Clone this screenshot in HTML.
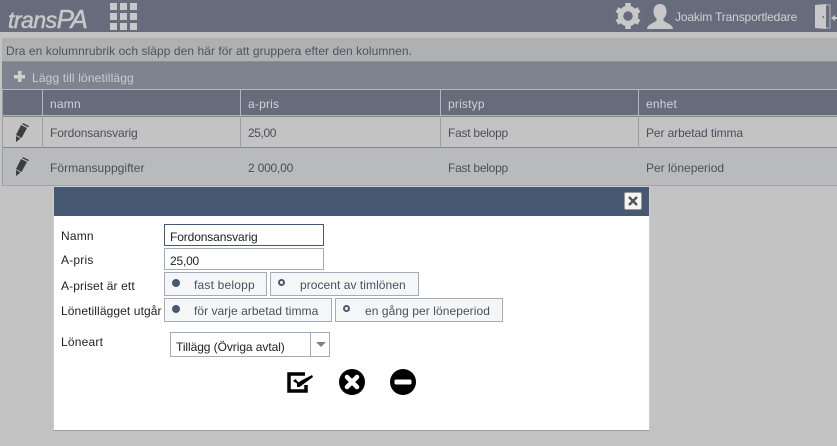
<!DOCTYPE html>
<html lang="sv"><head><meta charset="utf-8"><title>transPA</title>
<style>
html,body{margin:0;padding:0;width:837px;height:446px;overflow:hidden;background:#c3c3c3}
body{position:relative;font-family:"Liberation Sans",sans-serif;font-size:12px;color:#3c3c3c}
.a{position:absolute}
.t{position:absolute;white-space:nowrap;line-height:16px}
.v{position:absolute;width:1px}
.box{position:absolute;box-sizing:border-box;border:1px solid #a4abb8;background:#f5f6f8;height:24px}
.dot{position:absolute;border-radius:50%;box-sizing:border-box}
.on{width:8px;height:8px;background:#475873}
.off{width:7px;height:7px;border:2px solid #475873;background:#fff}
.d{color:#222}
.b{color:#4a4f5a}
</style></head><body>
<div class="a" style="left:0;top:0;width:837px;height:32px;background:#666c7c"></div>
<div class="t" style="left:8px;top:4px;font-size:23px;line-height:30px;font-style:italic;color:#c8c8c8;letter-spacing:-.5px;-webkit-text-stroke:.5px #c8c8c8">trans<span style="font-size:26px;letter-spacing:-1.500px">PA</span></div>
<svg class="a" style="left:110px;top:3px" width="27" height="27" fill="#c8c8c8"><rect width="7" height="7"/><rect x="10" width="7" height="7"/><rect x="20" width="7" height="7"/><rect y="10" width="7" height="7"/><rect x="10" y="10" width="7" height="7"/><rect x="20" y="10" width="7" height="7"/><rect y="20" width="7" height="7"/><rect x="10" y="20" width="7" height="7"/><rect x="20" y="20" width="7" height="7"/></svg>
<svg class="a" style="left:615px;top:3px" width="26" height="26" viewBox="0 0 26 26"><circle cx="13" cy="13" r="7.500" fill="none" stroke="#c8c8c8" stroke-width="5.500"/><g stroke="#c8c8c8" stroke-width="5.500"><path d="M13 0v4M13 22v4M2 6.600l3.500 2M20.500 17.400l3.500 2M24 6.600l-3.500 2M5.500 17.400l-3.500 2"/></g></svg>
<svg class="a" style="left:646px;top:3px" width="28" height="27" viewBox="0 0 28 27"><path d="M14 1c4.500 0 6.500 3.500 6.500 7.500 0 3-1.200 5.500-3 7v2c0 1.500 9.500 3.500 9.500 8.500H1c0-5 9.500-7 9.500-8.500v-2c-1.800-1.500-3-4-3-7C7.500 4.500 9.500 1 14 1z" fill="#c8c8c8"/></svg>
<div class="t" style="left:675px;top:9px;color:#d2d2d2;font-size:12px;letter-spacing:-.15px">Joakim Transportledare</div>
<svg class="a" style="left:814px;top:3px" width="23" height="28" viewBox="0 0 23 28"><path d="M1 2l11-1v25l-11-1z" fill="#c8c8c8"/><path d="M12 2h4v23h-4" fill="none" stroke="#b4b6bb" stroke-width="1"/><rect x="8.500" y="13" width="1.500" height="2" fill="#777"/><path d="M17 15l4-3v2h2v2h-2v2z" fill="#c8c8c8"/></svg>

<div class="a" style="left:2px;top:38px;width:835px;height:24px;background:#afb0b2;border-bottom:1px solid #8f9197;box-sizing:border-box"></div>
<div class="a" style="left:0;top:38px;width:2px;height:149px;background:#c3c3c3"></div>
<div class="t" style="left:6px;top:43px;font-size:12px;color:#4f525a;letter-spacing:.06px">Dra en kolumnrubrik och släpp den här för att gruppera efter den kolumnen.</div>
<div class="a" style="left:2px;top:62px;width:835px;height:27px;background:#7e848f"></div>
<svg class="a" style="left:14px;top:71px" width="11" height="11" fill="#d0d0d0"><rect x="4" width="3.500" height="11"/><rect y="4" width="11" height="3.500"/></svg>
<div class="t" style="left:32px;top:70px;color:#c9ccd0;letter-spacing:.15px">Lägg till lönetillägg</div>
<div class="a" style="left:2px;top:89px;width:835px;height:1px;background:#b4b6ba"></div>
<div class="a" style="left:2px;top:90px;width:835px;height:25px;background:#666c7c"></div>
<div class="a" style="left:2px;top:115px;width:835px;height:1px;background:#b0b1b4"></div>
<div class="a" style="left:2px;top:116px;width:835px;height:1px;background:#85878c"></div>
<div class="a" style="left:2px;top:117px;width:835px;height:30px;background:#c3c3c3"></div>
<div class="a" style="left:2px;top:147px;width:835px;height:1px;background:#85878c"></div>
<div class="a" style="left:2px;top:148px;width:835px;height:37px;background:#b9babc"></div>
<div class="a" style="left:2px;top:185px;width:835px;height:1px;background:#a3a4a7"></div>
<div class="v" style="left:2px;top:90px;height:96px;background:#9b9da1"></div>

<div class="v" style="left:42px;top:89px;height:27px;background:#b4b6ba"></div>
<div class="v" style="left:240px;top:89px;height:27px;background:#b4b6ba"></div>
<div class="v" style="left:440px;top:89px;height:27px;background:#b4b6ba"></div>
<div class="v" style="left:638px;top:89px;height:27px;background:#b4b6ba"></div>
<div class="v" style="left:42px;top:116px;height:32px;background:#9b9da1"></div>
<div class="v" style="left:240px;top:116px;height:32px;background:#9b9da1"></div>
<div class="v" style="left:440px;top:116px;height:32px;background:#9b9da1"></div>
<div class="v" style="left:638px;top:116px;height:32px;background:#9b9da1"></div>

<div class="t" style="left:50px;top:96px;color:#d0d2d6;letter-spacing:.2px">namn</div>
<div class="t" style="left:248px;top:96px;color:#d0d2d6;letter-spacing:.2px">a-pris</div>
<div class="t" style="left:448px;top:96px;color:#d0d2d6;letter-spacing:.2px">pristyp</div>
<div class="t" style="left:646px;top:96px;color:#d0d2d6;letter-spacing:.2px">enhet</div>

<svg class="a" style="left:15px;top:122px" width="15" height="20" viewBox="0 0 15 20"><path d="M6 3l6 3-5.500 10L1 13z" fill="#3d3d3d"/><path d="M8 1l6 3-.8 1.300-6-3z" fill="#3d3d3d"/><path d="M1 14l4.500 2.500L1 20z" fill="#3d3d3d"/></svg>
<svg class="a" style="left:15px;top:156px" width="15" height="20" viewBox="0 0 15 20"><path d="M6 3l6 3-5.500 10L1 13z" fill="#3d3d3d"/><path d="M8 1l6 3-.8 1.300-6-3z" fill="#3d3d3d"/><path d="M1 14l4.500 2.500L1 20z" fill="#3d3d3d"/></svg>

<div class="t b" style="left:50px;top:125px;letter-spacing:-.12px">Fordonsansvarig</div>
<div class="t b" style="left:248px;top:125px;letter-spacing:-.4px">25,00</div>
<div class="t b" style="left:448px;top:125px;letter-spacing:-.25px">Fast belopp</div>
<div class="t b" style="left:646px;top:125px;letter-spacing:-.1px">Per arbetad timma</div>
<div class="t b" style="left:50px;top:160px;letter-spacing:.03px">Förmansuppgifter</div>
<div class="t b" style="left:248px;top:160px;letter-spacing:-.2px">2 000,00</div>
<div class="t b" style="left:448px;top:160px;letter-spacing:-.25px">Fast belopp</div>
<div class="t b" style="left:646px;top:160px;letter-spacing:0">Per löneperiod</div>

<div class="a" style="left:53px;top:186px;width:597px;height:245px;background:#fff;border:1px solid #c9ccd3;border-bottom-color:#a0a0a0;box-sizing:border-box"></div>
<div class="a" style="left:54px;top:187px;width:595px;height:29px;background:#475873"></div>
<div class="a" style="left:624px;top:192px;width:18px;height:18px;box-sizing:border-box;background:#f4f4f4;border:1px solid #9a9a9a;border-radius:2px"></div>
<svg class="a" style="left:628px;top:196px" width="10" height="10"><path d="M1 1l8 8M9 1l-8 8" stroke="#555" stroke-width="2.400"/></svg>

<div class="t d" style="left:61px;top:228px;letter-spacing:.2px">Namn</div>
<div class="a" style="left:164px;top:224px;width:160px;height:22px;box-sizing:border-box;border:1px solid #475873;background:#fff"></div>
<div class="t d" style="left:170px;top:229px;letter-spacing:-.12px">Fordonsansvarig</div>
<div class="t d" style="left:61px;top:252px;letter-spacing:.2px">A-pris</div>
<div class="a" style="left:164px;top:248px;width:160px;height:22px;box-sizing:border-box;border:1px solid #a4abb8;background:#fff"></div>
<div class="t d" style="left:170px;top:253px;letter-spacing:-.2px">25,00</div>
<div class="t d" style="left:61px;top:278px;letter-spacing:.12px">A-priset är ett</div>
<div class="box" style="left:164px;top:272px;width:103px"></div>
<div class="dot on" style="left:172px;top:279px"></div>
<div class="t b" style="left:194px;top:277px;letter-spacing:.2px">fast belopp</div>
<div class="box" style="left:270px;top:272px;width:149px"></div>
<div class="dot off" style="left:278px;top:279px"></div>
<div class="t b" style="left:300px;top:277px;letter-spacing:.05px">procent av timlönen</div>
<div class="t d" style="left:61px;top:303px;letter-spacing:.1px">Lönetillägget utgår</div>
<div class="box" style="left:164px;top:298px;width:168px"></div>
<div class="dot on" style="left:172px;top:305px"></div>
<div class="t b" style="left:194px;top:303px;letter-spacing:.04px">för varje arbetad timma</div>
<div class="box" style="left:335px;top:298px;width:168px"></div>
<div class="dot off" style="left:343px;top:305px"></div>
<div class="t b" style="left:365px;top:303px;letter-spacing:.07px">en gång per löneperiod</div>
<div class="t d" style="left:61px;top:334px;letter-spacing:.2px">Löneart</div>
<div class="a" style="left:170px;top:332px;width:160px;height:25px;box-sizing:border-box;border:1px solid #a4abb8;background:#fff"></div>
<div class="v" style="left:310px;top:333px;height:23px;background:#a4abb8"></div>
<div class="a" style="left:316px;top:342px;width:0;height:0;border-left:5px solid transparent;border-right:5px solid transparent;border-top:5px solid #808080"></div>
<div class="t d" style="left:176px;top:339px;letter-spacing:-.07px">Tillägg (Övriga avtal)</div>

<svg class="a" style="left:287px;top:372px" width="27" height="21" viewBox="0 0 27 21"><path d="M18 2H2v17h17v-6" fill="none" stroke="#000" stroke-width="3.500"/><path d="M6 9l4 2.500 0 3.500 2.500 0L26 5l-1-2-11.500 6-2 1.500-3-3.500z" fill="#000"/></svg>
<svg class="a" style="left:339px;top:369px" width="26" height="26" viewBox="0 0 26 26"><circle cx="13" cy="13" r="13" fill="#000"/><path d="M8 8l10 10M18 8L8 18" stroke="#fff" stroke-width="4.500" stroke-linecap="round"/></svg>
<svg class="a" style="left:390px;top:369px" width="26" height="26" viewBox="0 0 26 26"><circle cx="13" cy="13" r="13" fill="#000"/><rect x="4.500" y="10.500" width="17" height="5" rx="1.500" fill="#fff"/></svg>
</body></html>
